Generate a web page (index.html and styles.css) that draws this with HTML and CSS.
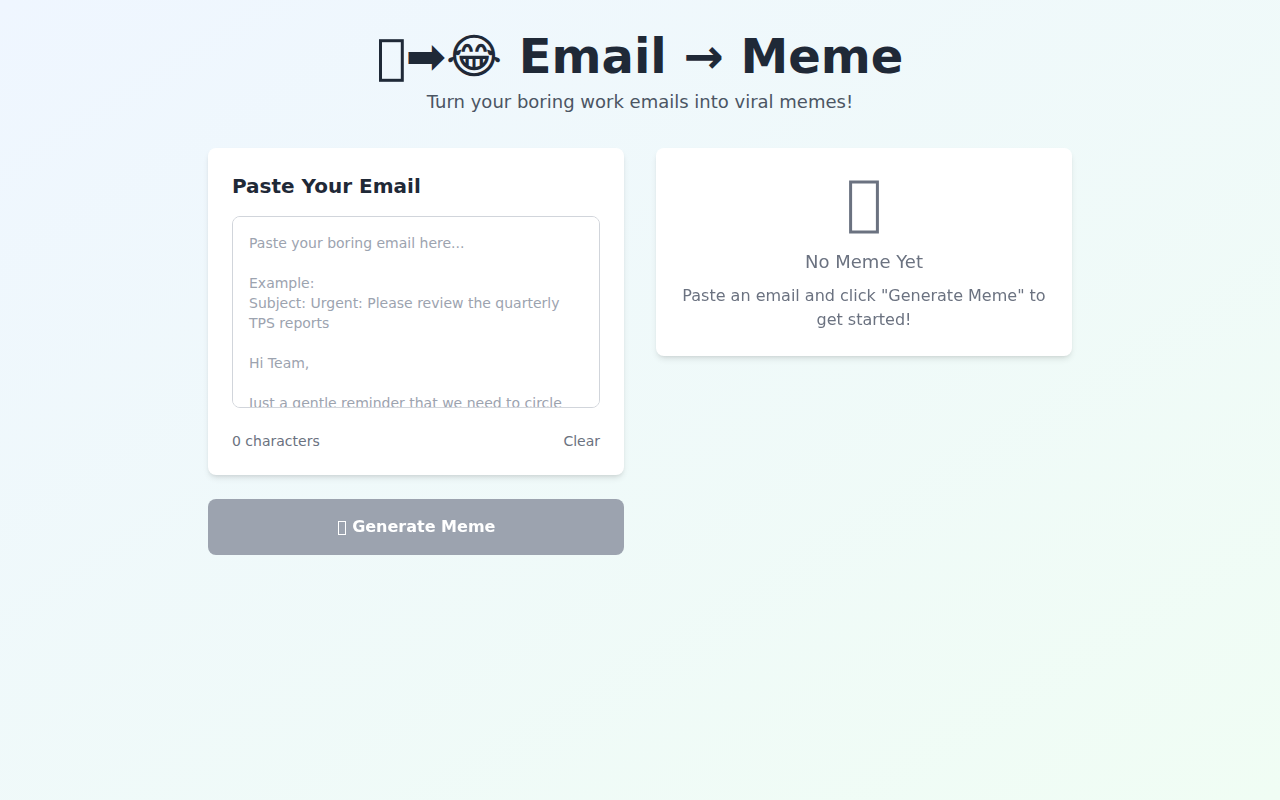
FILE: index.html
```html
<!DOCTYPE html>
<html lang="en">
<head>
    <meta charset="UTF-8">
    <meta name="viewport" content="width=device-width, initial-scale=1.0">
    <title>Email → Meme</title>
    <link rel="stylesheet" href="styles.css">
</head>
<body>
    <div class="container">
        <header class="header">
            <h1><svg class="title-icon" viewBox="0 0 29 41" aria-hidden="true"><rect x="3.5" y="1.7" width="21.8" height="39.6"/></svg>➡😂 Email → Meme</h1>
            <p>Turn your boring work emails into viral memes!</p>
        </header>

        <main class="columns">
            <section class="input-column">
                <div class="card">
                    <h2><label for="email-text">Paste Your Email</label></h2>
                    <textarea id="email-text" placeholder="Paste your boring email here...

Example:
Subject: Urgent: Please review the quarterly TPS reports

Hi Team,

Just a gentle reminder that we need to circle back on the quarterly reports.

Best regards,
Your Manager"></textarea>
                    <div class="card-footer">
                        <span><span id="char-count">0</span> characters</span>
                        <button type="button" class="clear-button" id="clear-button">Clear</button>
                    </div>
                </div>
                <button type="button" class="generate-button" id="generate-button" disabled><svg class="button-icon" viewBox="0 0 10 15" aria-hidden="true"><rect x="1.5" y="1.5" width="7" height="13"/></svg> Generate Meme</button>
            </section>

            <section class="card empty-state">
                <svg class="empty-icon" viewBox="0 0 36 60" aria-hidden="true"><rect x="4.6" y="10" width="26.8" height="50"/></svg>
                <h3>No Meme Yet</h3>
                <p>Paste an email and click "Generate Meme" to get started!</p>
            </section>
        </main>
    </div>

    <script>
        const emailText = document.getElementById('email-text');
        const charCount = document.getElementById('char-count');
        const generateButton = document.getElementById('generate-button');

        // Keep the counter and the button in step with the text
        function updateForm() {
            charCount.textContent = emailText.value.length;
            generateButton.disabled = emailText.value.trim() === '';
        }

        emailText.addEventListener('input', updateForm);
        document.getElementById('clear-button').addEventListener('click', () => {
            emailText.value = '';
            updateForm();
        });
    </script>
</body>
</html>
```

FILE: styles.css
```css
* {
    box-sizing: border-box;
}
body {
    margin: 0;
    min-height: 100vh;
    font-family: "DejaVu Sans", sans-serif;
    font-size: 16px;
    line-height: 24px;
    color: #1f2937;
    background: linear-gradient(to bottom right, #eff6ff, #f0fdf4);
}
h1, h2, h3, p {
    margin: 0;
}
button, textarea {
    font-family: inherit;
}
svg {
    fill: none;
    stroke: currentColor;
    stroke-width: 3;
    overflow: visible;
}
.container {
    max-width: 896px;
    margin: 0 auto;
    padding: 32px 16px;
}
.header {
    text-align: center;
    margin-bottom: 32px;
}
.header h1 {
    margin-bottom: 8px;
    font-size: 48px;
    line-height: 48px;
    font-weight: 700;
}
.title-icon {
    width: 29px;
    height: 41px;
    vertical-align: -7px;
}
.header p {
    font-size: 18px;
    line-height: 28px;
    color: #4b5563;
}
.columns {
    display: grid;
    grid-template-columns: 1fr 1fr;
    align-items: start;
    gap: 32px;
}
.input-column {
    display: flex;
    flex-direction: column;
    gap: 24px;
}
.card {
    padding: 24px;
    background: #fff;
    border-radius: 8px;
    box-shadow: 0 4px 6px -1px rgba(0, 0, 0, 0.1), 0 2px 4px -2px rgba(0, 0, 0, 0.1);
}
.card h2 {
    margin-bottom: 16px;
    font-size: 20px;
    line-height: 28px;
    font-weight: 600;
}
textarea {
    width: 100%;
    height: 192px;
    padding: 16px;
    border: 1px solid #d1d5db;
    border-radius: 8px;
    font-size: 14px;
    line-height: 20px;
    color: inherit;
    resize: none;
}
textarea::placeholder {
    color: #9ca3af;
}
.card-footer {
    display: flex;
    justify-content: space-between;
    align-items: center;
    margin-top: 16px;
    font-size: 14px;
    line-height: 20px;
    color: #6b7280;
}
.clear-button {
    padding: 0;
    border: none;
    background: none;
    font-size: 14px;
    line-height: 20px;
    color: inherit;
    cursor: pointer;
}
.generate-button {
    width: 100%;
    padding: 16px 24px;
    border: none;
    border-radius: 8px;
    background: #2563eb;
    font-size: 16px;
    line-height: 24px;
    font-weight: 600;
    color: #fff;
    cursor: pointer;
}
.generate-button:disabled {
    background: #9ca3af;
    cursor: not-allowed;
}
.button-icon {
    width: 10px;
    height: 15px;
    vertical-align: -3px;
    stroke-width: 1;
}
.empty-state {
    text-align: center;
    color: #6b7280;
}
.empty-icon {
    display: block;
    width: 36px;
    height: 60px;
    margin: 0 auto 16px;
}
.empty-state h3 {
    margin-bottom: 8px;
    font-size: 18px;
    line-height: 28px;
    font-weight: 400;
}
@media (max-width: 767px) {
    .columns {
        grid-template-columns: 1fr;
    }
}
```
